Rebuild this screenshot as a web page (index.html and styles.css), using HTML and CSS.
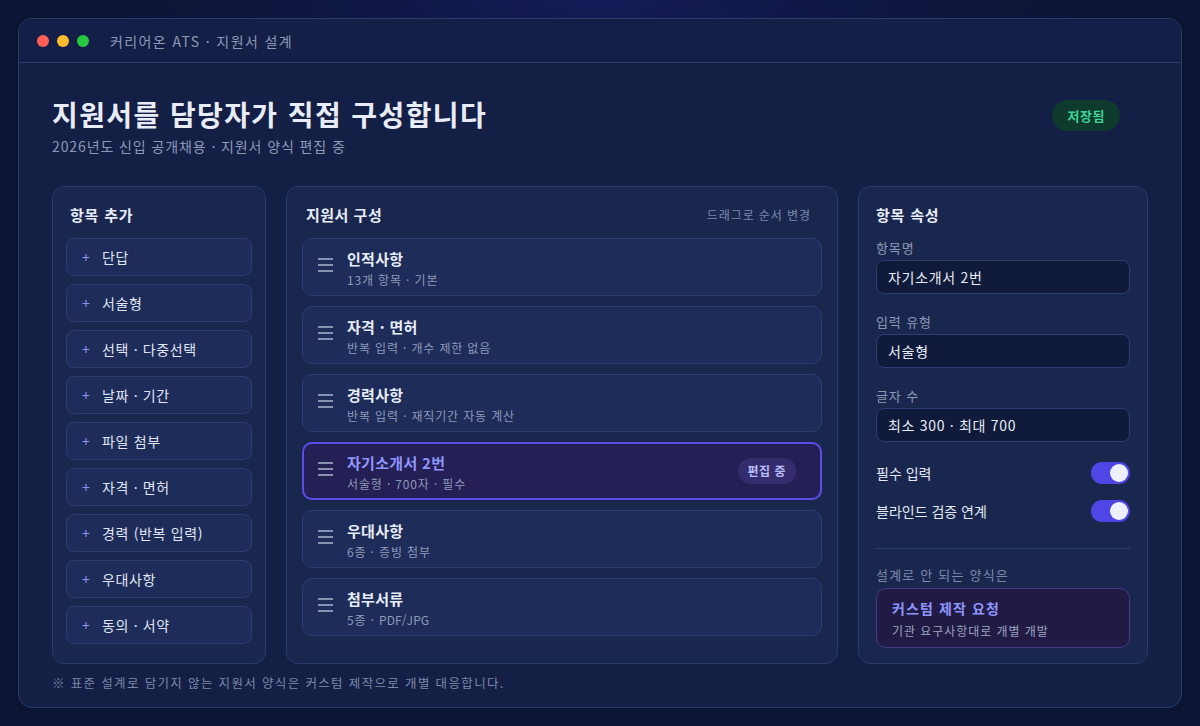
FILE: index.html
```html
<!DOCTYPE html>
<html lang="ko">
<head>
<meta charset="utf-8">
<title>커리어온 ATS · 지원서 설계</title>
<link rel="stylesheet" href="styles.css">
</head>
<body>
<div class="window">
  <div class="titlebar">
    <div class="dots"><span class="dot red"></span><span class="dot yellow"></span><span class="dot green"></span></div>
    <div class="wtitle">커리어온 ATS · 지원서 설계</div>
  </div>
  <main class="main">
    <header class="header">
      <div>
        <h1 class="h1">지원서를 담당자가 직접 구성합니다</h1>
        <p class="sub">2026년도 신입 공개채용 · 지원서 양식 편집 중</p>
      </div>
      <span class="saved">저장됨</span>
    </header>
    <section class="panels">
      <div class="panel panel-left">
        <h2 class="ptitle">항목 추가</h2>
        <ul class="addlist">
          <li class="additem"><span class="plus">+</span>단답</li>
          <li class="additem"><span class="plus">+</span>서술형</li>
          <li class="additem"><span class="plus">+</span>선택 · 다중선택</li>
          <li class="additem"><span class="plus">+</span>날짜 · 기간</li>
          <li class="additem"><span class="plus">+</span>파일 첨부</li>
          <li class="additem"><span class="plus">+</span>자격 · 면허</li>
          <li class="additem"><span class="plus">+</span>경력 (반복 입력)</li>
          <li class="additem"><span class="plus">+</span>우대사항</li>
          <li class="additem"><span class="plus">+</span>동의 · 서약</li>
        </ul>
      </div>
      <div class="panel panel-mid">
        <div class="phead">
          <h2 class="ptitle">지원서 구성</h2>
          <span class="hint">드래그로 순서 변경</span>
        </div>
        <ul class="form-list">
          <li class="fitem">
            <svg class="handle" width="15" height="14" viewBox="0 0 15 14"><rect x="0" y="0" width="15" height="2"/><rect x="0" y="6" width="15" height="2"/><rect x="0" y="12" width="15" height="2"/></svg>
            <div class="ftext"><div class="fname">인적사항</div><div class="fmeta">13개 항목 · 기본</div></div>
          </li>
          <li class="fitem">
            <svg class="handle" width="15" height="14" viewBox="0 0 15 14"><rect x="0" y="0" width="15" height="2"/><rect x="0" y="6" width="15" height="2"/><rect x="0" y="12" width="15" height="2"/></svg>
            <div class="ftext"><div class="fname">자격 · 면허</div><div class="fmeta">반복 입력 · 개수 제한 없음</div></div>
          </li>
          <li class="fitem">
            <svg class="handle" width="15" height="14" viewBox="0 0 15 14"><rect x="0" y="0" width="15" height="2"/><rect x="0" y="6" width="15" height="2"/><rect x="0" y="12" width="15" height="2"/></svg>
            <div class="ftext"><div class="fname">경력사항</div><div class="fmeta">반복 입력 · 재직기간 자동 계산</div></div>
          </li>
          <li class="fitem active">
            <svg class="handle" width="15" height="14" viewBox="0 0 15 14"><rect x="0" y="0" width="15" height="2"/><rect x="0" y="6" width="15" height="2"/><rect x="0" y="12" width="15" height="2"/></svg>
            <div class="ftext"><div class="fname">자기소개서 2번</div><div class="fmeta">서술형 · 700자 · 필수</div></div>
            <span class="editing">편집 중</span>
          </li>
          <li class="fitem">
            <svg class="handle" width="15" height="14" viewBox="0 0 15 14"><rect x="0" y="0" width="15" height="2"/><rect x="0" y="6" width="15" height="2"/><rect x="0" y="12" width="15" height="2"/></svg>
            <div class="ftext"><div class="fname">우대사항</div><div class="fmeta">6종 · 증빙 첨부</div></div>
          </li>
          <li class="fitem">
            <svg class="handle" width="15" height="14" viewBox="0 0 15 14"><rect x="0" y="0" width="15" height="2"/><rect x="0" y="6" width="15" height="2"/><rect x="0" y="12" width="15" height="2"/></svg>
            <div class="ftext"><div class="fname">첨부서류</div><div class="fmeta">5종 · <span class="latin">PDF/JPG</span></div></div>
          </li>
        </ul>
      </div>
      <div class="panel panel-right">
        <h2 class="ptitle">항목 속성</h2>
        <div class="field">
          <div class="label">항목명</div>
          <div class="input">자기소개서 2번</div>
        </div>
        <div class="field">
          <div class="label">입력 유형</div>
          <div class="input">서술형</div>
        </div>
        <div class="field">
          <div class="label">글자 수</div>
          <div class="input">최소 300 · 최대 700</div>
        </div>
        <div class="toggles">
          <div class="trow"><span>필수 입력</span><span class="toggle"><span class="knob"></span></span></div>
          <div class="trow"><span>블라인드 검증 연계</span><span class="toggle"><span class="knob"></span></span></div>
        </div>
        <div class="divider"></div>
        <div class="label cap">설계로 안 되는 양식은</div>
        <div class="custom">
          <div class="ctitle">커스텀 제작 요청</div>
          <div class="csub">기관 요구사항대로 개별 개발</div>
        </div>
      </div>
    </section>
    <p class="footnote">※ 표준 설계로 담기지 않는 지원서 양식은 커스텀 제작으로 개별 대응합니다.</p>
  </main>
</div>
</body>
</html>
```
FILE: styles.css
```css
* { box-sizing: border-box; }
html, body { margin: 0; padding: 0; }
body {
  width: 1200px;
  height: 726px;
  overflow: hidden;
  font-family: "Noto Sans CJK KR", "Noto Sans", sans-serif;
  color: #e4e9f6;
  background: radial-gradient(ellipse 500px 140px at 50% 0, #161c58 0%, #0e1640 60%, #0c1433 100%), #0c1433;
  padding: 18px;
}
ul { list-style: none; margin: 0; padding: 0; }
h1, h2, p { margin: 0; }

.window {
  width: 1164px;
  height: 690px;
  background: #131f45;
  border: 1px solid #2a3a6b;
  border-radius: 14px;
  overflow: hidden;
  display: flex;
  flex-direction: column;
}
.titlebar {
  height: 44px;
  flex: none;
  border-bottom: 1px solid #2a3a6b;
  background: #141f47;
  display: flex;
  align-items: center;
  padding-left: 18px;
}
.dots { display: flex; gap: 8px; }
.dot { width: 12px; height: 12px; border-radius: 50%; display: block; }
.red { background: #ff5f57; }
.yellow { background: #febc2e; }
.green { background: #28c840; }
.wtitle {
  margin-left: 21px;
  font-size: 14px;
  letter-spacing: 1.4px;
  color: #8e99b8;
  line-height: 20px;
}

.main { padding: 33px 33px 0; flex: 1; display: flex; flex-direction: column; }
.header { display: flex; justify-content: space-between; align-items: flex-start; padding-right: 28px; }
.h1 { font-size: 28px; line-height: 36px; font-weight: 700; letter-spacing: 1.4px; color: #e8ecf7; }
.sub { margin-top: 4px; font-size: 14px; line-height: 20px; letter-spacing: 0.9px; color: #8e99b8; }
.saved {
  margin-top: 4px;
  height: 31px;
  padding: 0 15px 0 16px;
  border-radius: 16px;
  background: #0f3a2e;
  color: #3bd596;
  font-size: 13px;
  font-weight: 700;
  letter-spacing: 0.5px;
  line-height: 31px;
}

.panels {
  margin-top: 30px;
  display: grid;
  grid-template-columns: 214px 552px 290px;
  gap: 20px;
}
.panel {
  background: #19274f;
  border: 1px solid #2a3a6b;
  border-radius: 12px;
  padding: 18px 13px 19px;
}
.panel-mid { padding: 18px 15px; }
.panel-right { padding: 18px 17px 15px; }
.ptitle { font-size: 15px; line-height: 20px; font-weight: 700; letter-spacing: 0.8px; color: #e8ecf7; padding-left: 4px; }
.panel-mid .ptitle { padding-left: 4px; letter-spacing: 0.5px; }
.panel-right .ptitle { padding-left: 0; }

.addlist { margin-top: 13px; display: flex; flex-direction: column; gap: 8px; }
.additem {
  height: 38px;
  background: #1d2c58;
  border: 1px solid #2c3d70;
  border-radius: 8px;
  display: flex;
  align-items: center;
  padding-left: 14px;
  font-size: 14px;
  letter-spacing: 0.65px;
  color: #e0e6f5;
}
.plus { width: 21px; color: #8b93f0; font-size: 14px; padding-left: 1px; letter-spacing: 0; }

.phead { display: flex; justify-content: space-between; align-items: center; padding-right: 12px; }
.hint { font-size: 12px; color: #7d88a8; line-height: 20px; letter-spacing: 0.9px; margin-right: -0.9px; }
.form-list { margin-top: 13px; display: flex; flex-direction: column; gap: 10px; }
.fitem {
  height: 58px;
  background: #1d2c58;
  border: 1px solid #2c3d70;
  border-radius: 10px;
  display: flex;
  align-items: flex-start;
  padding: 10px 24px 0 15px;
}
.fitem.active {
  border: 2px solid #5a4ee6;
  background: #241f55;
  padding: 9px 24px 0 14px;
}
.handle { fill: #8791b0; margin-top: 9px; flex: none; }
.ftext { margin-left: 14px; flex: 1; }
.fname { font-size: 15px; line-height: 20px; font-weight: 700; letter-spacing: 0.3px; color: #e8ecf7; }
.active .fname { color: #8e95fb; }
.fmeta { margin-top: 2px; font-size: 12px; line-height: 18px; letter-spacing: 0.85px; color: #8e99b8; }
.latin { letter-spacing: 0.1px; }
.editing {
  align-self: center;
  margin-top: -9px;
  height: 26px;
  line-height: 26px;
  padding: 0 10px;
  border-radius: 13px;
  background: #332d6e;
  color: #b9bdf5;
  font-size: 12px;
  font-weight: 700;
  letter-spacing: 0.5px;
}

.field { margin-top: 14px; }
.field + .field { margin-top: 19px; }
.label { font-size: 13px; line-height: 18px; letter-spacing: 0.9px; color: #8e99b8; }
.input {
  margin-top: 3px;
  height: 34px;
  background: #101a3a;
  border: 1px solid #2c3d70;
  border-radius: 8px;
  padding: 0 11px;
  font-size: 14px;
  line-height: 32px;
  letter-spacing: 0.7px;
  color: #e8ecf7;
}
.toggles { margin-top: 20px; display: flex; flex-direction: column; gap: 16px; }
.trow { display: flex; justify-content: space-between; align-items: center; font-size: 14px; color: #e4e9f6; height: 22px; }
.toggle {
  width: 39px; height: 22px; border-radius: 11px;
  background: #4f46e5;
  display: flex; align-items: center; justify-content: flex-end;
  padding-right: 2px;
}
.knob { width: 18px; height: 18px; border-radius: 50%; background: #eef0ff; display: block; }
.divider { margin-top: 26px; height: 1px; background: #2c3d70; }
.cap { margin-top: 17px; color: #7d88a8; letter-spacing: 1.2px; }
.custom {
  margin-top: 4px;
  height: 60px;
  background: #211a44;
  border: 1px solid #463a8a;
  border-radius: 10px;
  padding: 9px 15px 0;
}
.ctitle { font-size: 14px; line-height: 20px; font-weight: 700; letter-spacing: 1.1px; color: #8e95fb; }
.csub { margin-top: 4px; font-size: 12px; line-height: 18px; letter-spacing: 0.95px; color: #9aa3c0; }

.footnote { margin-top: 10px; font-size: 12.5px; line-height: 18px; letter-spacing: 1.35px; color: #7d88a8; }
```
